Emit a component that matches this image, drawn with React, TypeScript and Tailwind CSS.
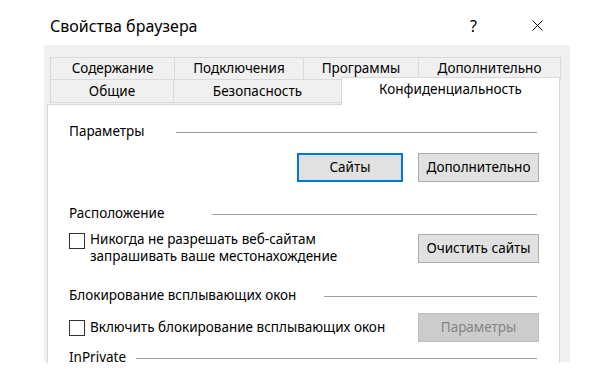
import { X } from "lucide-react";

function Tab({ label, width, className = "" }: { label: string; width: string; className?: string }) {
  return (
    <div
      className={`flex items-center justify-center border border-[#d9d9d9] -ml-px first:ml-0 bg-[#f0f0f0] ${width} ${className}`}
    >
      {label}
    </div>
  );
}

function Heading({ label, line }: { label: string; line: string }) {
  return (
    <div className="flex h-[20px] items-center justify-between">
      <span>{label}</span>
      <div className={`mr-[2px] mt-[2px] h-px bg-[#a0a0a0] ${line}`} />
    </div>
  );
}

function Button({
  label,
  focused,
  disabled,
  width = "w-[121px]",
}: {
  label: string;
  focused?: boolean;
  disabled?: boolean;
  width?: string;
}) {
  const tone = disabled
    ? "bg-[#cccccc] border-[#bfbfbf] text-[#838383]"
    : focused
      ? "bg-[#e1e1e1] border-[#0078d7] border-2"
      : "bg-[#e1e1e1] border-[#adadad]";
  return (
    <div className={`flex h-[29px] items-center justify-center border ${tone} ${width}`}>{label}</div>
  );
}

function Checkbox() {
  return <div className="h-[16px] w-[16px] shrink-0 border border-[#333333] bg-white" />;
}

export default function App() {
  return (
    <div
      className="h-[380px] w-[611px] overflow-hidden bg-white text-[13.5px] text-black"
      style={{ fontFamily: '"Noto Sans", "Segoe UI", sans-serif' }}
    >
      <div className="flex h-[45px] items-center pl-[50px] pr-[64px] pt-[6px]">
        <span className="flex-1 text-[16px]">Свойства браузера</span>
        <span className="mr-[51px] text-[16px]">?</span>
        <X size={19} strokeWidth={1.2} />
      </div>

      <div className="ml-[44px] h-[317px] w-[526px] bg-[#f0f0f0] pl-[3px] pt-[12px]">
        <div className="pl-[3px]">
          <div className="flex h-[23px]">
            <Tab label="Содержание" width="w-[125px]" />
            <Tab label="Подключения" width="w-[130px]" />
            <Tab label="Программы" width="w-[116px]" />
            <Tab label="Дополнительно" width="w-[143px]" />
          </div>
          <div className="-mt-px flex h-[25px] items-start">
            <Tab label="Общие" width="w-[124px]" className="h-[24px]" />
            <Tab label="Безопасность" width="w-[169px]" className="h-[24px]" />
            <div className="relative z-10 -ml-px -mt-[2px] flex h-[28px] w-[219px] items-start justify-center border border-b-0 border-[#d9d9d9] bg-white pt-[1px]">
              Конфиденциальность
            </div>
          </div>
        </div>

        <div className="h-[259px] w-[513px] border border-b-0 border-[#d9d9d9] bg-white pl-[21px] pr-[20px] pt-[16px]">
          <Heading label="Параметры" line="w-[361px]" />
          <div className="mt-[12px] flex justify-end gap-[15px]">
            <Button label="Сайты" focused width="w-[106px]" />
            <Button label="Дополнительно" />
          </div>

          <div className="mt-[21px]">
            <Heading label="Расположение" line="w-[325px]" />
          </div>
          <div className="mt-[8px] flex items-center justify-between">
            <div className="flex items-start gap-[5px] pt-[2px]">
              <Checkbox />
              <div className="-mt-[2px] leading-[17px]">
                Никогда не разрешать веб-сайтам
                <br />
                запрашивать ваше местонахождение
              </div>
            </div>
            <Button label="Очистить сайты" />
          </div>

          <div className="mt-[20px]">
            <Heading label="Блокирование всплывающих окон" line="w-[213px]" />
          </div>
          <div className="mt-[8px] flex items-center justify-between">
            <div className="flex items-center gap-[5px]">
              <Checkbox />
              <span>Включить блокирование всплывающих окон</span>
            </div>
            <Button label="Параметры" disabled />
          </div>

          <div className="mt-[5px]">
            <Heading label="InPrivate" line="w-[401px]" />
          </div>
        </div>
      </div>
    </div>
  );
}
